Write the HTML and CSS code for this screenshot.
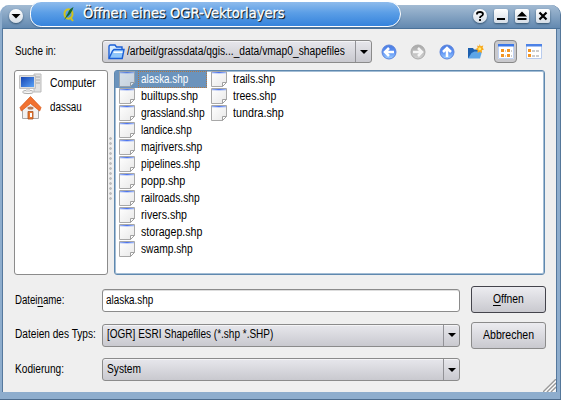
FILE: index.html
```html
<!DOCTYPE html>
<html lang="de">
<head>
<meta charset="utf-8">
<title>Öffnen eines OGR-Vektorlayers</title>
<link rel="stylesheet" href="styles.css">
</head>
<body>
<svg class="defs" width="0" height="0">
  <defs>
    <linearGradient id="blueBtn" x1="0" y1="0" x2="0" y2="1"><stop offset="0" stop-color="#4c7ce0"/><stop offset=".5" stop-color="#5a90f4"/><stop offset="1" stop-color="#a0d0ff"/></linearGradient>
    <linearGradient id="grayBtn" x1="0" y1="0" x2="0" y2="1"><stop offset="0" stop-color="#a8a8a8"/><stop offset="1" stop-color="#d2d2d2"/></linearGradient>
    <linearGradient id="screen" x1="0" y1="0" x2="1" y2="1"><stop offset="0" stop-color="#1645b4"/><stop offset="1" stop-color="#5aa2f6"/></linearGradient>
    <linearGradient id="paper" x1="0" y1="0" x2="1" y2="1"><stop offset="0" stop-color="#fff"/><stop offset="1" stop-color="#e8e8e8"/></linearGradient>
    <linearGradient id="band" x1="0" x2="1" y1="0" y2="0"><stop offset="0" stop-color="#9cb4f4"/><stop offset=".5" stop-color="#4a72ee"/><stop offset="1" stop-color="#a4bcf8"/></linearGradient>
    <symbol id="file" viewBox="0 0 16 17">
      <path d="M.5 .5h15v11l-4 4H.5z" fill="url(#paper)" stroke="#a8a8a8"/>
      <path d="M1 1h14v1.300H1z" fill="url(#band)"/>
      <path d="M11.500 15.500v-4h4z" fill="#fff" stroke="#a0a0a0"/>
    </symbol>
  </defs>
</svg>
<div class="window">
  <header class="titlebar">
    <div class="round menu"><svg width="14" height="14"><path d="M2.500 5h9L7 9.500z"/></svg></div>
    <div class="pill">
      <svg class="quill" width="12" height="16" viewBox="0 0 12 16"><ellipse cx="5.500" cy="8" rx="4" ry="4.800" fill="none" stroke="#d2c41c" stroke-width="2"/><path d="M7 11l3 4" stroke="#d2c41c" stroke-width="2"/><path d="M10.500 1Q6 3 5 7L1 14l3-3q5-4 6.500-10z" fill="#18672b"/></svg>
      <span class="fit" data-w="202">Öffnen eines OGR-Vektorlayers</span>
    </div>
    <div class="controls">
      <div class="round"><svg width="14" height="14"><path d="M4 5.500V4.500Q4.300 3 7 3t3 2q0 1.200-1.500 2Q7 7.500 7 9M7 10v2" fill="none" stroke="#000" stroke-width="1.800"/></svg></div>
      <div class="square"><svg width="14" height="14"><path d="M3 9h8v2H3z"/></svg></div>
      <div class="square"><svg width="14" height="14"><path d="M7 2.500l5 5H2zM2.500 9h9v2h-9z"/></svg></div>
      <div class="square"><svg width="14" height="14"><path d="M3.500 3.500l7 7m0-7l-7 7" stroke="#000" stroke-width="2.200"/></svg></div>
    </div>
  </header>
  <main class="content">
    <div class="toolbar">
      <label class="caption"><span class="fit" data-w="41">Suche in:</span></label>
      <div class="combo path">
        <svg class="folder" width="17" height="16" viewBox="0 0 17 16"><path d="M1 14V2.500Q1 1 2.500 1H7l1.500 2H14v3" fill="#d8ecff" stroke="#1b5fd6" stroke-width="1.400"/><path d="M1 14.500L4.500 7l1.500-1.500h10l-1.800 9z" fill="#8fc6fa" stroke="#1b5fd6" stroke-width="1.400"/><path d="M5.500 8.200h9" stroke="#fff" stroke-width="1.500"/></svg>
        <span class="fit" data-w="218">/arbeit/grassdata/qgis..._data/vmap0_shapefiles</span>
        <i class="drop"></i>
      </div>
      <div class="tools">
        <svg width="16" height="16" viewBox="0 0 16 16"><circle cx="8" cy="8" r="7" fill="url(#blueBtn)" stroke="#5c84dc"/><path d="M13 8H4m4-4L4 8l4 4" fill="none" stroke="#fff" stroke-width="2.500"/></svg>
        <svg width="16" height="16" viewBox="0 0 16 16"><circle cx="8" cy="8" r="7" fill="url(#grayBtn)" stroke="#aaa"/><path d="M3 8h9M8 4l4 4-4 4" fill="none" stroke="#f6f6f6" stroke-width="2.500"/></svg>
        <svg width="16" height="16" viewBox="0 0 16 16"><circle cx="8" cy="8" r="7" fill="url(#blueBtn)" stroke="#5c84dc"/><path d="M8 13V4M4 8l4-4 4 4" fill="none" stroke="#fff" stroke-width="2.500"/></svg>
        <svg width="16" height="16" viewBox="0 0 16 16"><path d="M0 14V4h5l1 1.500h6V14z" fill="#1c5fae"/><path d="M0 14.500L3.500 9l3-1.500H14l-2 7z" fill="#5da5e6"/><path d="M11.500 0l1.200 2.200 2.600-.7-.7 2.300L16 5.500l-2.200.8.2 2.700-2.400-1.300L9.500 9l.2-2.500L7.500 5l2.100-1-.4-2.600 2 .9z" fill="#f9a91c"/><circle cx="11.700" cy="4.700" r="1.500" fill="#ffed70"/></svg>
        <button class="toggle"><svg width="16" height="15" viewBox="0 0 16 15"><path d="M0 0h16v15H0z" fill="#fff"/><path d="M.5 .5h15v14H.5z" fill="none" stroke="#c0d2f2"/><path d="M0 0h16v2.500H0z" fill="#3c78e8"/><path d="M3 5h3v3H3zM9 5h3v3H9zM3 10h3v3H3zM9 10h3v3H9z" fill="#f29422"/><path d="M7 7h1M13 7h1M7 12h1M13 12h1" stroke="#999"/></svg></button>
        <svg class="details" width="16" height="15" viewBox="0 0 16 15"><path d="M.5 .5h15v14H.5z" fill="#fff" stroke="#b8cbed"/><path d="M0 0h16v2.500H0z" fill="#4d82e6"/><path d="M2 5h3v3H2zM2 10h3v3H2z" fill="#f29422"/><path d="M6 7h3m1 0h3M6 12h3m1 0h3" stroke="#999"/></svg>
      </div>
    </div>
    <div class="panes">
      <nav class="places">
        <div class="place"><svg width="23" height="22" viewBox="0 0 23 22"><path d="M15 1h7v18h-7z" fill="#e2e2e2" stroke="#bbb"/><path d="M17 4h4M17 7h4M17 10h4" stroke="#aaa"/><path d="M.5 2.500h16v13H.5z" fill="#dedede" stroke="#c2c2c2"/><path d="M2 4h13v10H2z" fill="url(#screen)"/><ellipse cx="9" cy="19" rx="5.500" ry="1.600" fill="#fafafa" stroke="#aaa"/><path d="M7 16h4v3H7z" fill="#ddd"/></svg><span class="fit" data-w="46">Computer</span></div>
        <div class="place home"><svg width="23" height="24" viewBox="0 0 23 24"><path d="M3.500 12v10.500h16V12L11.500 5z" fill="#f2f2f2" stroke="#aaa"/><path d="M11.500 .5L1 11.500l1.300 3.500L11.500 7.500l9.200 7.500 1.300-3.500z" fill="#f17231" stroke="#d7520f" stroke-width=".7"/><path d="M9 15.500h5V23H9z" fill="#e87830" stroke="#a65222" stroke-width=".8"/><path d="M11 17h2v4h-2z" fill="#fff"/><ellipse cx="11.500" cy="12" rx="3" ry="1.500" fill="#b77b58"/></svg><span class="fit" data-w="32">dassau</span></div>
      </nav>
      <div class="splitter"></div>
      <section class="files">
        <div class="file selected"><svg><use href="#file"/></svg><b><span class="fit" data-w="47">alaska.shp</span></b></div>
        <div class="file"><svg><use href="#file"/></svg><span class="fit" data-w="57">builtups.shp</span></div>
        <div class="file"><svg><use href="#file"/></svg><span class="fit" data-w="64">grassland.shp</span></div>
        <div class="file"><svg><use href="#file"/></svg><span class="fit" data-w="51">landice.shp</span></div>
        <div class="file"><svg><use href="#file"/></svg><span class="fit" data-w="61">majrivers.shp</span></div>
        <div class="file"><svg><use href="#file"/></svg><span class="fit" data-w="59">pipelines.shp</span></div>
        <div class="file"><svg><use href="#file"/></svg><span class="fit" data-w="44">popp.shp</span></div>
        <div class="file"><svg><use href="#file"/></svg><span class="fit" data-w="59">railroads.shp</span></div>
        <div class="file"><svg><use href="#file"/></svg><span class="fit" data-w="46">rivers.shp</span></div>
        <div class="file"><svg><use href="#file"/></svg><span class="fit" data-w="61">storagep.shp</span></div>
        <div class="file"><svg><use href="#file"/></svg><span class="fit" data-w="52">swamp.shp</span></div>
        <div class="file"><svg><use href="#file"/></svg><span class="fit" data-w="42">trails.shp</span></div>
        <div class="file"><svg><use href="#file"/></svg><span class="fit" data-w="43">trees.shp</span></div>
        <div class="file"><svg><use href="#file"/></svg><span class="fit" data-w="51">tundra.shp</span></div>
      </section>
    </div>
    <div class="form">
      <div class="fields">
        <label class="caption"><span class="fit" data-w="49">Datei<u>n</u>ame:</span></label>
        <div class="input"><span class="fit" data-w="47">alaska.shp</span></div>
        <label class="caption"><span class="fit" data-w="81">Dateien des Typs:</span></label>
        <div class="combo"><span class="fit" data-w="166">[OGR] ESRI Shapefiles (*.shp *.SHP)</span><i class="drop"></i></div>
        <label class="caption"><span class="fit" data-w="49">Kodierung:</span></label>
        <div class="combo"><span class="fit" data-w="34">System</span><i class="drop"></i></div>
      </div>
      <div class="actions">
        <button class="default"><span class="fit" data-w="31"><u>O</u>ffnen</span></button>
        <button><span class="fit" data-w="51">Abbrechen</span></button>
      </div>
    </div>
    <svg class="grip" width="13" height="13"><path d="M0 13L13 0M4 13l9-9M8 13l5-5" stroke="#999" stroke-width="1.300"/><path d="M2 13L13 2M6 13l7-7M10 13l3-3" stroke="#fff"/></svg>
  </main>
</div>
<script src="fit.js"></script>
</body>
</html>
```
FILE: fit.js
```js
// Condense each label to the width it has in the dialog's narrow face.
document.querySelectorAll(".fit").forEach(function (label) {
  var natural = label.offsetWidth;
  var width = Number(label.dataset.w);
  label.style.transform = "scaleX(" + width / natural + ")";
  label.style.marginRight = width - natural + "px";
});
```
FILE: styles.css
```css
* { box-sizing: border-box; }
body {
  margin: 0;
  width: 561px;
  height: 400px;
  overflow: hidden;
  background: #fff;
  color: #000;
  font: 12px/16px "Liberation Sans", sans-serif;
}
svg { display: block; flex: none; }
.defs { position: absolute; }
.fit { display: inline-block; flex: none; white-space: pre; transform-origin: 0 50%; padding-bottom: 2px; }
u { text-decoration: none; border-bottom: 1px solid #000; display: inline-block; line-height: 12px; }

.window {
  height: 395px;
  margin-top: 5px;
  padding: 0 1px 7px 0;
  border-radius: 9px 10px 0 0;
  border-bottom: 1px solid #4d6b8c;
  background: #8eadcd;
  display: flex;
  flex-direction: column;
  box-shadow: inset -1px 0 #55779a;
}
.titlebar {
  height: 24px;
  flex: none;
  display: flex;
  border-radius: 9px 9px 0 0;
  margin-left: 2px;
  padding: 0 7px 0 6px;
  border-bottom: 1px solid #4b7299;
  background: linear-gradient(#a3bbd3, #6389b0);
}
.round, .square {
  width: 14px;
  height: 14px;
  margin-top: 4px;
  background: linear-gradient(#fff, #d5dde6);
  box-shadow: 0 1px 2px #34536f;
  flex: none;
}
.round { border-radius: 50%; }
.square { border-radius: 2px; }
.menu { margin-left: 1px; }
.pill {
  width: 371px;
  height: 26px;
  margin: -4px 0 0 7px;
  flex: none;
  border: 1.500px solid #fff;
  border-radius: 12px 14px 14px 12px;
  background: linear-gradient(#8ebbec, #5b9ee6 45%, #3583dc);
  box-shadow: 0 1px 1px #48729d;
  display: flex;
  align-items: center;
  color: #fff;
  font: 14.500px/20px "DejaVu Sans", sans-serif;
  text-shadow: 1px 1px 0 #123, 1px 1px 1px #000;
  -webkit-text-stroke: .300px #fff;
}
.quill { margin: 0 8px 0 32px; }
.controls { display: flex; gap: 7px; margin-left: 72px; }

.content {
  flex: 1;
  margin: 0 3px 0 2px;
  border-left: 1px solid #55789d;
  border-right: 1px solid #55789d;
  background: #efefef;
  padding: 11px 11px 0;
  position: relative;
}
.toolbar { display: flex; height: 23px; align-items: center; }
.caption { width: 88px; flex: none; padding-left: .500px; display: flex; }
.combo, .input {
  height: 23px;
  border: 1px solid #8b8b8b;
  border-radius: 3px;
  display: flex;
  align-items: center;
  padding-left: 4px;
  background: linear-gradient(#e7e7ec, #c9c9cf);
  box-shadow: inset 0 1px #f4f4f6;
}
.input { background: #fff; padding-left: 3px; box-shadow: inset 0 1px #ddd; }
.path { width: 270px; }
.folder { margin: 0 2px 0 1px; }
.drop {
  width: 16px;
  height: 21px;
  flex: none;
  margin-left: auto;
  border-left: 1px solid #929297;
  display: grid;
  place-items: center;
}
.drop::after { content: ""; border: 4px solid transparent; border-top-color: #000; border-bottom: 0; }
.tools { display: flex; align-items: center; margin-left: 9px; gap: 13px; }
.toggle {
  width: 23px;
  height: 23px;
  margin: 0 -4px 0 -3px;
  padding: 0;
  border: 1px solid #888;
  border-radius: 4px;
  background: #c9c9cd;
  display: grid;
  place-items: center;
}

.panes { display: flex; height: 205px; margin-top: 7px; }
.places { width: 94px; border: 1px solid #8b8b8b; border-radius: 3px; background: #fff; padding: 2px 0 0 4px; }
.place { display: flex; height: 22px; align-items: center; gap: 8px; }
.home { height: 25px; }
.splitter {
  width: 3px;
  height: 64px;
  margin: 67px 2px 0 1px;
  background: radial-gradient(circle at 1.500px 1.500px, #bebebe 1px, #fff0 1.600px) 0 0 / 3px 5px;
}
.files {
  width: 432px;
  border: 1px solid #5f88ae;
  border-radius: 3px;
  background: #fff;
  box-shadow: inset 0 0 0 1px #a3bdd5;
  display: grid;
  grid-template-rows: repeat(11, 17px);
  grid-template-columns: 92px 92px;
  grid-auto-flow: column;
}
.file { display: flex; align-items: center; gap: 6px; padding-left: 4px; }
.file > svg { width: 16px; height: 17px; }
.selected { background: #6b93bc; color: #fff; }
.selected > svg { opacity: .72; }
.selected b { font-weight: normal; outline: 1px dotted #b27843; outline-offset: -1px; flex: 1; height: 17px; margin-left: -3px; padding-left: 3px; }

.form { display: flex; margin-top: 11px; }
.fields { width: 446px; display: grid; grid-template-columns: 88px 358px; grid-template-rows: 23px 23px 23px; row-gap: 11.500px; align-items: center; padding-top: 3px; }
.actions { margin-left: 11px; display: flex; flex-direction: column; gap: 9px; }
.actions button {
  width: 75px;
  height: 27px;
  padding: 0;
  border: 1px solid #8b8b8b;
  border-radius: 3px;
  background: linear-gradient(#ececf0, #c9c9cf);
  color: #000;
  font: inherit;
  display: flex;
  align-items: center;
  justify-content: center;
}
.actions .default { border-color: #44444c; }
.grip { position: absolute; right: 0; bottom: 0; }
```
